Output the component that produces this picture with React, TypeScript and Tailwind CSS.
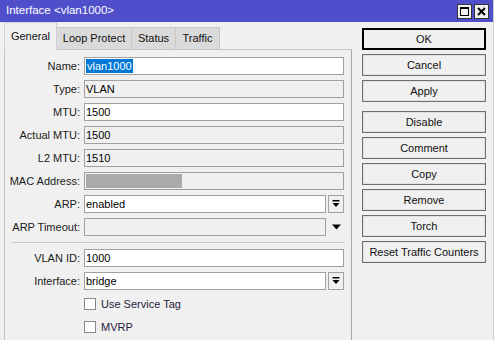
import React from "react";

const font = { fontFamily: '"Liberation Sans", Arial, sans-serif' };

const Label: React.FC<{ text: string }> = ({ text }) => (
  <div className="w-[74px] shrink-0 text-right text-[#1a1a1a] leading-[18px]">{text}</div>
);

const Field: React.FC<{ value?: string; readOnly?: boolean; className?: string; children?: React.ReactNode }> = ({
  value,
  readOnly,
  className = "w-[260px]",
  children,
}) => (
  <div
    className={`${className} h-[18px] border border-[#a0a0a0] ${
      readOnly ? "bg-[#f0f0f0]" : "bg-white"
    } flex items-center pl-[1px] text-black leading-[16px] overflow-hidden`}
  >
    {children ?? value}
  </div>
);

const DropButton = () => (
  <div className="ml-[2px] w-[16px] h-[18px] border border-[#a0a0a0] bg-[#f0f0f0] flex items-center justify-center">
    <svg width="8" height="8" viewBox="0 0 8 8">
      <rect x="0.5" y="0" width="7" height="1.5" fill="#000" />
      <polygon points="0.5,3 7.5,3 4,7" fill="#000" />
    </svg>
  </div>
);

const Row: React.FC<{ label: string; children: React.ReactNode }> = ({ label, children }) => (
  <div className="flex items-center h-[18px]">
    <Label text={label + ":"} />
    <div className="ml-[4px] flex items-center">{children}</div>
  </div>
);

const Check: React.FC<{ text: string }> = ({ text }) => (
  <div className="flex items-start h-[18px] pl-[78px]">
    <div className="mt-[3px] w-[12px] h-[12px] border border-[#8a8a8a] bg-white" />
    <span className="ml-[5px] mt-[1px] text-[#26203a] leading-[16px]">{text}</span>
  </div>
);

const Btn: React.FC<{ text: string; primary?: boolean; className?: string }> = ({ text, primary, className = "" }) => (
  <div
    className={`h-[22px] w-[124px] flex items-center justify-center bg-[#f0f0f0] text-[#111] ${
      primary ? "border-2 border-black" : "border border-[#6e6e6e] shadow-[inset_0_0_0_1px_#e0e0e0]"
    } ${className}`}
  >
    {text}
  </div>
);

export default function App() {
  return (
    <div className="w-[494px] h-[340px] bg-[#f0f0f0] text-[11px] overflow-hidden border-r border-[#cfcfcf]" style={font}>
      {/* Title bar */}
      <div className="h-[22px] bg-[#4f4fcc] flex items-center pl-[6px] pr-[4px]">
        <span className="text-white text-[11.5px]">Interface &lt;vlan1000&gt;</span>
        <div className="ml-auto flex gap-[2px]">
          <div className="w-[15px] h-[15px] bg-[#f0f0f0] border border-[#333] flex items-center justify-center">
            <div className="w-[9px] h-[9px] border border-black border-t-2" />
          </div>
          <div className="w-[15px] h-[15px] bg-[#f0f0f0] border border-[#333] flex items-center justify-center">
            <svg width="9" height="9" viewBox="0 0 9 9">
              <path d="M1 1 L8 8 M8 1 L1 8" stroke="#000" strokeWidth="2" />
            </svg>
          </div>
        </div>
      </div>

      <div className="flex">
        {/* Left: tabs + panel */}
        <div className="ml-[4px] w-[348px]">
          <div className="h-[27px] flex items-end">
            <div className="relative z-10 h-[28px] w-[53px] -mb-[1px] border border-b-0 border-[#d0d0d0] bg-[#f0f0f0] flex items-center justify-center text-[#111]">
              General
            </div>
            <div className="h-[22px] w-[75px] border border-b-0 border-l-0 border-[#c8c8c8] bg-[#dadada] flex items-center justify-center text-[#111]">
              Loop Protect
            </div>
            <div className="h-[22px] w-[44px] border border-b-0 border-l-0 border-[#c8c8c8] bg-[#dadada] flex items-center justify-center text-[#111]">
              Status
            </div>
            <div className="h-[22px] w-[44px] border border-b-0 border-l-0 border-[#c8c8c8] bg-[#dadada] flex items-center justify-center text-[#111]">
              Traffic
            </div>
          </div>
          <div className="h-[291px] border border-b-0 border-[#c4c4c4] border-r-[#a8a8a8] pl-[1px] pt-[7px] flex flex-col gap-[5px]">
            <Row label="Name">
              <Field>
                <span className="bg-[#0078d7] text-white leading-[14px] px-[1px]">vlan1000</span>
              </Field>
            </Row>
            <Row label="Type">
              <Field value="VLAN" readOnly />
            </Row>
            <Row label="MTU">
              <Field value="1500" />
            </Row>
            <Row label="Actual MTU">
              <Field value="1500" readOnly />
            </Row>
            <Row label="L2 MTU">
              <Field value="1510" readOnly />
            </Row>
            <Row label="MAC Address">
              <Field readOnly>
                <div className="w-[96px] h-[14px] bg-[#aaaaaa]" />
              </Field>
            </Row>
            <Row label="ARP">
              <Field value="enabled" className="w-[242px]" />
              <DropButton />
            </Row>
            <Row label="ARP Timeout">
              <Field readOnly className="w-[242px]" />
              <div className="ml-[2px] w-[16px] h-[18px] flex items-center justify-center">
                <svg width="9" height="6" viewBox="0 0 9 6">
                  <polygon points="0,0.5 9,0.5 4.5,5.5" fill="#000" />
                </svg>
              </div>
            </Row>
            <div className="ml-[6px] w-[333px] h-[1px] bg-[#c9c9c9] my-[1px]" />
            <Row label="VLAN ID">
              <Field value="1000" />
            </Row>
            <Row label="Interface">
              <Field value="bridge" className="w-[242px]" />
              <DropButton />
            </Row>
            <Check text="Use Service Tag" />
            <Check text="MVRP" />
          </div>
        </div>

        {/* Right: buttons */}
        <div className="ml-[10px] pt-[6px] flex flex-col gap-[4px]">
          <Btn text="OK" primary />
          <Btn text="Cancel" />
          <Btn text="Apply" />
          <Btn text="Disable" className="mt-[5px]" />
          <Btn text="Comment" />
          <Btn text="Copy" />
          <Btn text="Remove" />
          <Btn text="Torch" />
          <Btn text="Reset Traffic Counters" />
        </div>
      </div>
    </div>
  );
}
